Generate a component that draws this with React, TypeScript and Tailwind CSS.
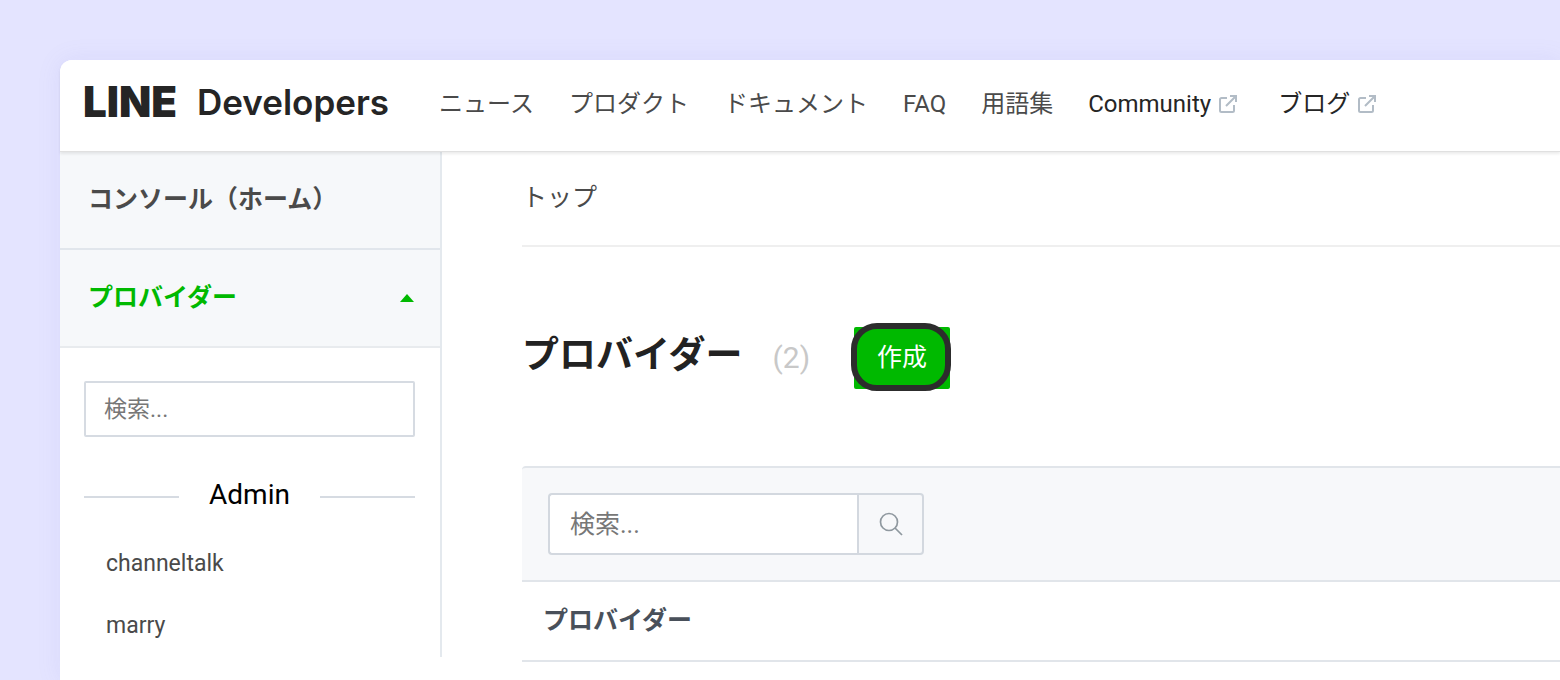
import { useState } from 'react';

const navItems = [
  { label: 'ニュース', external: false },
  { label: 'プロダクト', external: false },
  { label: 'ドキュメント', external: false },
  { label: 'FAQ', external: false },
  { label: '用語集', external: false },
  { label: 'Community', external: true },
  { label: 'ブログ', external: true },
];

const providers = ['channeltalk', 'marry'];

const ExternalIcon = () => (
  <svg width="18" height="18" viewBox="0 0 18 18" fill="none" stroke="#b2bcc6" strokeWidth="2" aria-hidden="true">
    <path d="M8 3H2.5A1.5 1.5 0 0 0 1 4.5v11A1.5 1.5 0 0 0 2.5 17h11a1.5 1.5 0 0 0 1.5-1.5V10" />
    <path d="M11 1h6v6M17 1 7 11" />
  </svg>
);

const SearchIcon = () => (
  <svg width="24" height="24" viewBox="0 0 24 24" fill="none" stroke="#8f989f" strokeWidth="1.7" aria-hidden="true">
    <circle cx="10" cy="10" r="8.5" />
    <path d="m16 16 7 7" />
  </svg>
);

const Header = () => (
  <header className="relative flex h-[92px] items-center whitespace-nowrap rounded-tl-xl border-b border-[#e0e0e0] bg-white pl-[23px] pb-1 shadow-[0_2px_3px_rgba(0,0,0,0.08)]">
    <a href="#" className="flex items-center gap-5 pb-1 font-[Inter] text-[#252525]">
      <span className="text-[42px] leading-[48px] font-black">LINE</span>
      <span className="text-[35px] leading-[48px] font-semibold">Developers</span>
    </a>
    <nav className="ml-[50px] flex items-center gap-[35px] text-2xl text-[#4a4a4a]">
      {navItems.map((item) => (
        <a
          key={item.label}
          href="#"
          className={`flex items-center gap-2 ${item.external ? 'mr-1.5 text-[#252525]' : ''}`}
        >
          {item.label}
          {item.external && <ExternalIcon />}
        </a>
      ))}
    </nav>
  </header>
);

const Sidebar = () => {
  const [open, setOpen] = useState(true);

  return (
    <aside className="mb-6 w-[382px] shrink-0 self-start border-r-2 border-[#e4e9ee]">
      <a
        href="#"
        className="flex h-[98px] items-center border-b-2 border-[#e1e6ec] bg-[#f6f8fa] pl-7 text-[25px] font-bold text-[#4a4a4a]"
      >
        コンソール（ホーム）
      </a>
      <button
        type="button"
        onClick={() => setOpen(!open)}
        aria-expanded={open}
        className="flex h-[98px] w-full items-center justify-between border-b-2 border-[#e8ebee] bg-[#f6f8fa] pl-7 pr-[26px] text-[25px] font-bold text-[#00b900]"
      >
        プロバイダー
        <svg width="14" height="8" viewBox="0 0 14 8" fill="currentColor" className={open ? '' : 'rotate-180'} aria-hidden="true">
          <path d="M7 0l7 8H0z" />
        </svg>
      </button>
      {open && (
        <div className="pt-[33px] pl-6 pr-[25px]">
          <input
            type="search"
            aria-label="検索"
            placeholder="検索..."
            className="h-14 w-full rounded-xs border-2 border-[#d6dbe2] px-[18px] text-[23px] placeholder-[#777777]"
          />
          <div className="mt-10 flex items-center gap-[30px] pb-5 text-[28px] leading-9 text-black">
            <span className="mt-1 h-0.5 flex-1 bg-[#d6dbe2]" />
            Admin
            <span className="mt-1 h-0.5 flex-1 bg-[#d6dbe2]" />
          </div>
          <ul className="px-[22px] text-[23px] leading-[62px] text-[#4a4a4a]">
            {providers.map((name) => (
              <li key={name}>
                <a href="#">{name}</a>
              </li>
            ))}
          </ul>
        </div>
      )}
    </aside>
  );
};

const Main = () => (
  <main className="min-w-0 flex-1 pl-20">
    <nav className="flex h-[95px] items-center border-b-2 border-[#efefef] pb-0.5 text-[25px] text-[#4a4a4a]">
      <a href="#">トップ</a>
    </nav>
    <div className="mt-20 flex items-center">
      <h1 className="pb-1 text-[37px] leading-[58px] font-bold text-[#222222]">プロバイダー</h1>
      <span className="ml-[30px] text-3xl text-[#c8c8c8]">(2)</span>
      <button type="button" className="relative ml-11 h-[62px] w-24 rounded-xs bg-[#00b900] text-[25px] text-white">
        作成
        <span className="absolute -top-1 -right-px -bottom-0.5 -left-[3px] rounded-[26px] border-[6px] border-[#2c2c2c]" />
      </button>
    </div>
    <form className="mt-[77px] flex rounded-tl-sm border-t-2 border-[#e1e5ea] bg-[#f7f8fa] px-[26px] pt-[25px] pb-[25px]">
      <input
        type="search"
        aria-label="検索"
        placeholder="検索..."
        className="h-[62px] w-[309px] rounded-l-sm border-2 border-r-0 border-[#d3d8df] bg-white px-5 text-[25px] placeholder-[#777777]"
      />
      <button
        type="button"
        aria-label="検索"
        className="flex h-[62px] w-[67px] items-center justify-center rounded-r-sm border-2 border-[#d3d8df]"
      >
        <SearchIcon />
      </button>
    </form>
    <table className="w-full border-y-2 border-[#e1e5ea]">
      <thead>
        <tr>
          <th className="h-20 px-[21px] text-left text-[25px] font-bold text-[#49505a]">プロバイダー</th>
        </tr>
      </thead>
    </table>
  </main>
);

const App = () => (
  <div
    lang="ja"
    className="flex min-h-screen overflow-hidden bg-[#e4e4ff] pt-[60px] pl-[60px] font-['Roboto','Noto_Sans_CJK_JP',sans-serif]"
  >
    <div className="min-w-0 flex-1 rounded-tl-xl bg-white shadow-[0_0_24px_rgba(120,120,220,0.1)]">
      <Header />
      <div className="flex">
        <Sidebar />
        <Main />
      </div>
    </div>
  </div>
);

export default App;
